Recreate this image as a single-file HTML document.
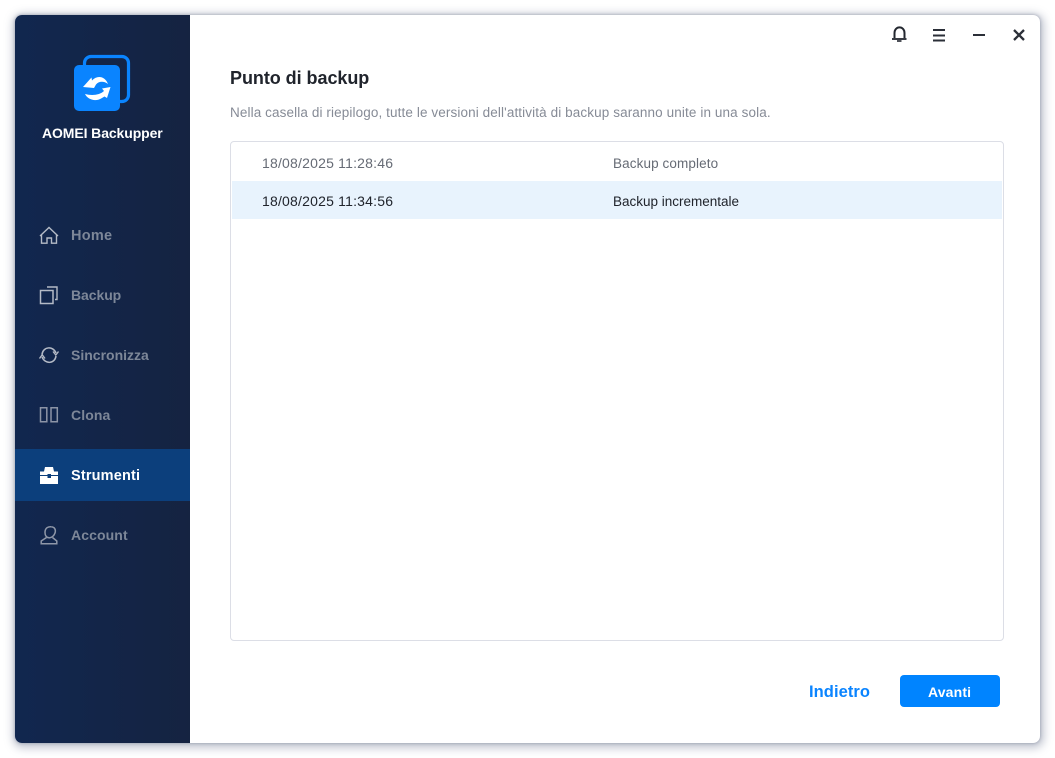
<!DOCTYPE html>
<html lang="it">
<head>
<meta charset="utf-8">
<title>AOMEI Backupper</title>
<style>
html,body{margin:0;padding:0;width:1055px;height:758px;overflow:hidden;background:#fff}
body{font-family:"Liberation Sans",sans-serif;position:relative}
.win{position:absolute;left:15px;top:15px;width:1025px;height:728px;background:#fff;border-radius:7px;box-shadow:0 0 3px 0 rgba(90,100,125,.5),1px 2px 9px 3px rgba(110,120,145,.42);overflow:hidden}
.side{position:absolute;left:15px;top:15px;width:175px;height:728px;background:linear-gradient(90deg,#11274f,#152341);border-radius:7px 0 0 7px}
.t{position:absolute;white-space:nowrap;line-height:20px}
.nav{font-size:14px;font-weight:700;color:#7d8798;left:71px;letter-spacing:.1px}
.act{position:absolute;left:15px;top:449px;width:175px;height:52px;background:#0c3f7c}
.box{position:absolute;left:230px;top:141px;width:772px;height:498px;border:1px solid #dcdee6;border-radius:4px;background:#fff}
.row{position:absolute;left:232px;top:181px;width:770px;height:38px;background:#e8f3fd}
.btn{position:absolute;left:900px;top:675px;width:100px;height:32px;background:#0084ff;border-radius:4px}
svg{position:absolute;left:0;top:0}
</style>
</head>
<body>
<div class="win"></div>
<div class="side"></div>
<div class="act"></div>
<div class="box"></div>
<div class="row"></div>
<div class="btn"></div>

<svg width="1055" height="758" viewBox="0 0 1055 758" fill="none">
  <!-- logo -->
  <rect x="84.5" y="56.500" width="44" height="45" rx="6.500" stroke="#0a84ff" stroke-width="3.200"/>
  <rect x="74" y="65" width="46" height="46" rx="5" fill="#0a84ff"/>
  <path d="M83 87 L91.500 77.500 L92 80.500 C97 75 105 76 108 84 C104 81 99 81 96 84.500 L94 88 Z" fill="#fff"/>
  <path d="M110.500 87 L102 88.500 L104 91 C100 95 92 96 85 94 C88 100 96 102 102 98 L104.500 96.500 L107 98 Z" fill="#fff"/>
  <!-- home -->
  <path d="M40 236 L49 227.500 L58 236 M41.500 235 V243.200 H47 V238 H51.500 V243.200 H56.500 V235" stroke="#b4bac6" stroke-width="1.400"/>
  <!-- backup -->
  <rect x="40.500" y="290.500" width="12.500" height="13" stroke="#b4bac6" stroke-width="1.500"/>
  <path d="M47 287 H57 V299.500 H55" stroke="#b4bac6" stroke-width="1.400"/>
  <!-- sync -->
  <path d="M42 354.500 C43 346.500 53 345.500 56 353 M56 356 C55 364 45 364.500 42 357" stroke="#b4bac6" stroke-width="1.500"/>
  <path d="M53 351.500 L55.800 355 L58.500 351.500 M39.500 358.500 L42.200 354.800 L45 358.500" stroke="#b4bac6" stroke-width="1.400"/>
  <!-- clone -->
  <path d="M40.500 407.800 H46.800 V421.800 H40.500 Z M51 407.800 H57.300 V421.800 H51 Z" stroke="#8c94a6" stroke-width="1.500"/>
  <!-- tools -->
  <path d="M40 471.500 H44 L45 467 H53 L54 471.500 H58 V475 H40 Z M40 476 H58 V484 H40 Z" fill="#fff"/>
  <rect x="47.500" y="474" width="3.500" height="4" fill="#0c3f7c"/>
  <!-- account -->
  <path d="M45 532.500 C45 528 48 526.500 51 526.800 C55 527 56 530 55 533 C54 536 51.500 538 49 537.800 C46.500 537.500 45 535.500 45 532.500 Z" stroke="#8f97a8" stroke-width="1.500"/>
  <path d="M46.500 537.500 L41.200 541 V543.800 H56.800 V541 L52.500 537.500" stroke="#8f97a8" stroke-width="1.500"/>
  <!-- bell -->
  <path d="M894.500 38 V33 C894.500 25.500 904.500 25.500 904.500 33 V38" stroke="#23272f" stroke-width="2"/>
  <path d="M892 39 H906.500" stroke="#23272f" stroke-width="1.800"/>
  <path d="M897 41 H901.500" stroke="#23272f" stroke-width="1.600"/>
  <!-- menu -->
  <path d="M933 30 H945 M933 35.500 H945 M933 40.500 H945" stroke="#2b2f38" stroke-width="2"/>
  <!-- minimize -->
  <path d="M973 35 H985" stroke="#2b2f38" stroke-width="2"/>
  <!-- close -->
  <path d="M1014 30 L1024 40 M1024 30 L1014 40" stroke="#2b2f38" stroke-width="2.300"/>
</svg>

<div class="t" style="left:42px;top:123px;font-size:14px;font-weight:700;color:#fff;letter-spacing:-.1px">AOMEI Backupper</div>
<div class="t nav" style="top:226px;font-size:14.5px;letter-spacing:.25px">Home</div>
<div class="t nav" style="top:285px;letter-spacing:-.07px">Backup</div>
<div class="t nav" style="top:345px;letter-spacing:0">Sincronizza</div>
<div class="t nav" style="top:405px">Clona</div>
<div class="t nav" style="top:466px;color:#fff;font-size:14.5px;letter-spacing:.17px">Strumenti</div>
<div class="t nav" style="top:525px">Account</div>

<div class="t" style="left:230px;top:68px;font-size:18px;font-weight:700;color:#20242c;letter-spacing:-.05px">Punto di backup</div>
<div class="t" style="left:230px;top:103px;font-size:13.5px;color:#868b96;letter-spacing:.11px">Nella casella di riepilogo, tutte le versioni dell'attività di backup saranno unite in una sola.</div>

<div class="t" style="left:262px;top:153px;font-size:14px;color:#666b75;letter-spacing:.2px">18/08/2025 11:28:46</div>
<div class="t" style="left:613px;top:154px;font-size:13.5px;color:#666b75;letter-spacing:.11px">Backup completo</div>
<div class="t" style="left:262px;top:191px;font-size:14px;color:#20242c;letter-spacing:.2px">18/08/2025 11:34:56</div>
<div class="t" style="left:613px;top:192px;font-size:13.5px;color:#20242c;letter-spacing:0">Backup incrementale</div>

<div class="t" style="left:809px;top:682px;font-size:16.5px;font-weight:700;color:#0a84ff;letter-spacing:.07px">Indietro</div>
<div class="t" style="left:928px;top:682px;font-size:14px;font-weight:700;color:#fff;letter-spacing:.15px">Avanti</div>
</body>
</html>
